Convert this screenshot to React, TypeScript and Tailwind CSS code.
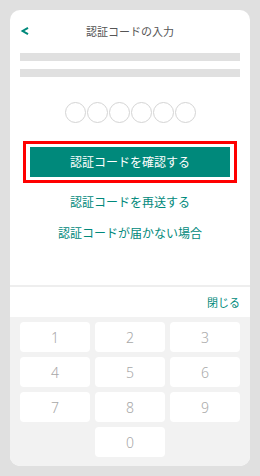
import React from "react";

const KEYS = ["1", "2", "3", "4", "5", "6", "7", "8", "9"];

function Key({ label }: { label: string }) {
  return (
    <div className="h-[30px] bg-white rounded-[4px] flex items-center justify-center text-[14px] text-[#a8a8a8] font-light font-['Noto_Sans',sans-serif]">
      {label}
    </div>
  );
}

export default function App() {
  return (
    <div className="w-[260px] h-[476px] bg-[#e0e0e0] p-[10px] font-['Noto_Sans_CJK_JP','Noto_Sans',sans-serif]">
      <div className="h-full bg-white rounded-[10px] overflow-hidden flex flex-col">
        {/* Header */}
        <div className="relative h-[43px] shrink-0 flex items-center justify-center">
          <svg
            className="absolute left-[10px] top-[16px]"
            width="10"
            height="10"
            viewBox="0 0 10 10"
            fill="none"
          >
            <path d="M8 1.8 L2.6 5 L8 8.2" stroke="#00897b" strokeWidth="2" />
          </svg>
          <span className="text-[11px] leading-none text-[#555]">認証コードの入力</span>
        </div>

        {/* Placeholder text lines */}
        <div className="mx-[10px] flex flex-col gap-2">
          <div className="h-2 bg-[#e0e0e0]" />
          <div className="h-2 bg-[#e0e0e0]" />
        </div>

        {/* Code digits */}
        <div className="mt-[25px] flex justify-center gap-px">
          {Array.from({ length: 6 }).map((_, i) => (
            <div key={i} className="w-[21px] h-[21px] rounded-full border border-[#d4d4d4]" />
          ))}
        </div>

        {/* Confirm button (highlighted) */}
        <div className="mt-[18px] mx-[13px] border-[3px] border-[#ff0000] px-[4px] py-[3px]">
          <button className="w-full h-[30px] bg-[#00897b] text-white text-[12px] leading-none">
            認証コードを確認する
          </button>
        </div>

        <div className="mt-[10px] text-center text-[12px] leading-[17px] text-[#00897b]">
          認証コードを再送する
        </div>
        <div className="mt-[14px] text-center text-[12px] leading-[17px] text-[#00897b]">
          認証コードが届かない場合
        </div>

        <div className="flex-1" />

        {/* Keyboard */}
        <div className="border-t-2 border-[#eeeeee]">
          <div className="h-[30px] flex items-center justify-end pr-[10px] text-[11px] text-[#00897b]">
            閉じる
          </div>
          <div className="bg-[#f2f2f2] pt-[5px] pb-[9px] px-[10px] grid grid-cols-3 gap-[5px]">
            {KEYS.map((k) => (
              <Key key={k} label={k} />
            ))}
            <div />
            <Key label="0" />
            <div />
          </div>
        </div>
      </div>
    </div>
  );
}
